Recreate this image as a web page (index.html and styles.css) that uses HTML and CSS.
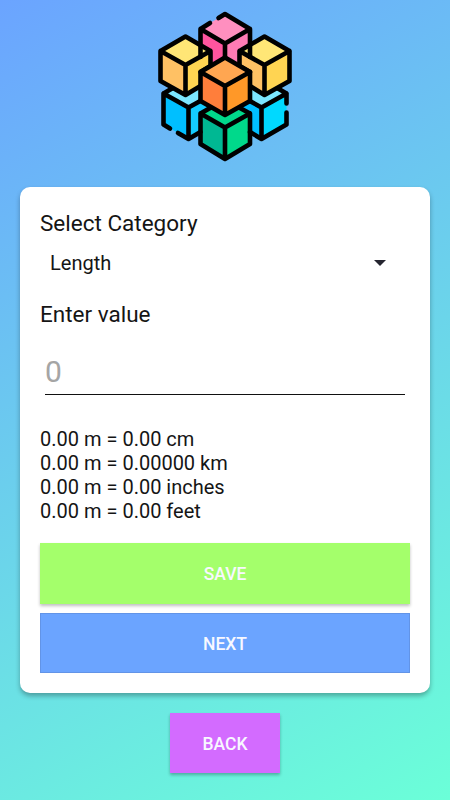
FILE: index.html
```html
<!DOCTYPE html>
<html lang="en">
<head>
<meta charset="utf-8">
<title>Unit converter</title>
<link rel="stylesheet" href="styles.css">
</head>
<body>
<main class="screen">
  <svg class="logo" viewBox="150 5 150 160" aria-hidden="true">
    <g class="fills">
      <path fill="#ff8fbf" d="M225 14L250 29L225 43.5L200.5 29Z"/>
      <path fill="#ff559f" d="M200.5 29L225 43.5V73H200.5Z"/>
      <path fill="#ff7bb5" d="M250 29L225 43.5V73H250Z"/>
      <path fill="#7be6ff" d="M163.5 94L188.5 80L213 94L188.5 108.5ZM286.5 94L261.5 80L237 94L261.5 108.5Z"/>
      <path fill="#00bfff" d="M163.5 94L188.5 108.5V139L163.5 124.5ZM237 94L261.5 108.5V139L237 124.5Z"/>
      <path fill="#00d9ff" d="M286.5 94L261.5 108.5V139L286.5 124.5Z"/>
      <path fill="#14ccff" d="M213 94L188.5 108.5V139L213 124.5Z"/>
      <path fill="#ffe676" d="M185.5 36.5L210.5 50.5L185.5 65L160.5 51ZM264.5 36.5L239.5 50.5L264.5 65L289.5 51Z"/>
      <path fill="#ffc164" d="M160.5 51L185.5 65V95L160.5 81ZM239.5 51L264.5 65V95L239.5 81Z"/>
      <path fill="#ffd452" d="M210.5 51L185.5 65V95L210.5 81ZM289.5 51L264.5 65V95L289.5 81Z"/>
      <path fill="#00d98b" d="M225 99L250 113.5L225 128L200.5 113.5ZM250 113.5L225 128V159L250 144Z"/>
      <path fill="#00b893" d="M200.5 113.5L225 128V159L200.5 144Z"/>
    </g>
    <g class="lines">
      <path d="M218.5 18L225 14L250 29V57M210 23L200.5 29V57M200.5 29L225 43.5L250 29M225 43.5V57"/>
      <path d="M200.5 72L210.5 66V51L185.5 36.5L160.5 51V81L185.5 95L200.5 86M160.5 51L185.5 65L210.5 51M185.5 65V95"/>
      <path d="M250 72L239.5 66V51L264.5 36.5L289.5 51V81L264.5 95L250 86M239.5 51L264.5 65L289.5 51M264.5 65V95"/>
      <path d="M170 128.5L163.5 124.5V93.5L172 88.5M163.5 93.5L188.5 107.5L203 99.5M188.5 107.5V139M178 133L188.5 139L200.5 132"/>
      <path d="M278 88.5L286.5 93.5V103.5M286.5 93.5L261.5 107.5L247 99.5M261.5 107.5V139M286.5 112.5V124.5L261.5 139L250 132"/>
      <path d="M211 107.5L200.5 113.5V144L225 159L250 144V113.5L239 107.5M200.5 113.5L225 127.5L250 113.5M225 127.5V159"/>
    </g>
    <g class="fills">
      <path fill="#ffa651" d="M225 57.5L250 72L225 86L200.5 72Z"/>
      <path fill="#ff7e3b" d="M200.5 72L225 86V115L200.5 101Z"/>
      <path fill="#ff9828" d="M250 72L225 86V115L250 101Z"/>
    </g>
    <path class="lines" d="M225 57.5L250 72V101L225 115L200.5 101V72ZM200.5 72L225 86L250 72M225 86V115"/>
  </svg>

  <section class="card">
    <div class="label">Select Category</div>
    <div class="spinner">
      <span>Length</span>
      <svg class="arrow" viewBox="0 0 12 6" aria-hidden="true"><path d="M0 0H12L6 6Z"/></svg>
    </div>
    <div class="label value-label">Enter value</div>
    <div class="field">0</div>
    <div class="results">
      <div>0.00 m = 0.00 cm</div>
      <div>0.00 m = 0.00000 km</div>
      <div>0.00 m = 0.00 inches</div>
      <div>0.00 m = 0.00 feet</div>
    </div>
    <button class="button save">SAVE</button>
    <button class="button next">NEXT</button>
  </section>

  <button class="button back">BACK</button>
</main>
</body>
</html>
```

FILE: styles.css
```css
* {
  box-sizing: border-box;
}

body {
  margin: 0;
  font-family: Roboto, sans-serif;
  color: #151515;
}

.screen {
  width: 450px;
  height: 800px;
  padding: 5px 20px 0;
  display: flex;
  flex-direction: column;
  align-items: center;
  overflow: hidden;
  background: linear-gradient(150.64deg, #6ba4ff, #6bffd8);
}

.logo {
  width: 150px;
  height: 160px;
  flex: none;
}

.lines {
  fill: none;
  stroke: #000;
  stroke-width: 4.6;
  stroke-linecap: round;
  stroke-linejoin: round;
}

.card {
  width: 410px;
  height: 506px;
  margin-top: 22px;
  padding: 20px;
  flex: none;
  border-radius: 10px;
  background: #fff;
  box-shadow: 0 3px 5px rgba(0, 0, 0, 0.3);
}

.label {
  height: 34px;
  font-size: 22.5px;
  line-height: 33px;
}

.spinner {
  height: 44px;
  padding: 0 24px 0 10px;
  display: flex;
  align-items: center;
  justify-content: space-between;
  font-size: 20px;
}

.arrow {
  width: 12px;
  height: 6px;
  fill: #252530;
}

.value-label {
  margin-top: 12px;
  line-height: 35px;
}

.field {
  height: 51px;
  margin: 13px 5px 0;
  border-bottom: 1px solid #111;
  font-size: 30px;
  line-height: 56px;
  color: #a5a5a5;
}

.results {
  height: 97px;
  margin-top: 32px;
  font-size: 20px;
  line-height: 24px;
}

.button {
  display: block;
  width: 370px;
  height: 60px;
  padding: 2px 0 0;
  border: 0;
  font: 500 17.5px Roboto, sans-serif;
  color: #f8f8ff;
}

.save {
  height: 61px;
  margin-top: 19px;
  padding-top: 1px;
  background: #a4ff6b;
  box-shadow: 0 2px 3px rgba(0, 0, 0, 0.25);
}

.next {
  margin-top: 9px;
  background: #6ba4ff;
  box-shadow: inset 0 0 0 1px rgba(60, 80, 120, 0.18);
}

.back {
  width: 110px;
  margin-top: 20px;
  flex: none;
  background: #d36bff;
  box-shadow: 0 2px 3px rgba(0, 0, 0, 0.28);
}
```
